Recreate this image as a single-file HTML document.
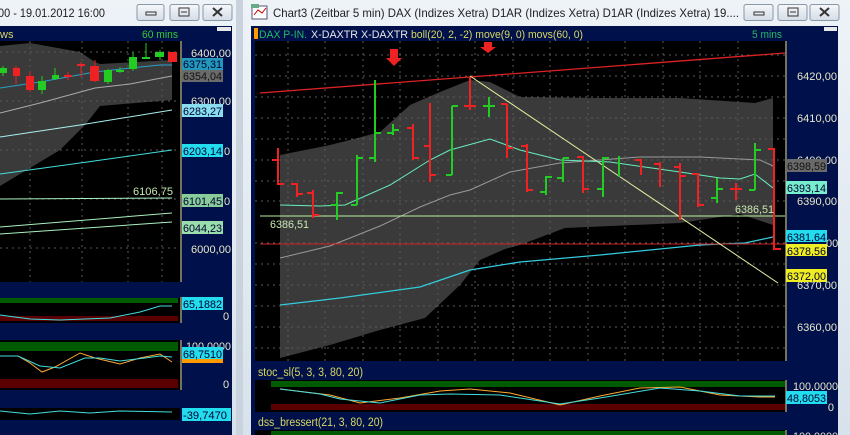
<!DOCTYPE html>
<html><head><meta charset="utf-8"><style>
html,body{margin:0;padding:0;width:850px;height:435px;overflow:hidden;background:#d9e2ec;}
svg{display:block;font-family:"Liberation Sans",sans-serif;}
</style></head><body>
<svg width="850" height="435" viewBox="0 0 850 435" xmlns="http://www.w3.org/2000/svg">
<defs>
<linearGradient id="tb" x1="0" y1="0" x2="0" y2="1"><stop offset="0" stop-color="#eef3f8"/><stop offset="1" stop-color="#d8e2ec"/></linearGradient>
<linearGradient id="btn" x1="0" y1="0" x2="0" y2="1"><stop offset="0" stop-color="#f6f8fb"/><stop offset="1" stop-color="#d3dce6"/></linearGradient>
</defs>
<rect x="0" y="0" width="850" height="435" fill="#d9e2ec"/>
<rect x="0" y="0" width="236" height="435" fill="url(#tb)"/>
<rect x="236" y="0" width="7" height="435" fill="#c9d3de"/>
<rect x="243" y="0" width="607" height="435" fill="url(#tb)"/>
<!-- left title -->
<text x="-2" y="17" font-size="12" fill="#1e1e1e" textLength="107" lengthAdjust="spacingAndGlyphs">00 - 19.01.2012 16:00</text>
<g stroke="#8a97a6" fill="url(#btn)"><rect x="137" y="4.5" width="27" height="16" rx="2"/><rect x="170" y="4.5" width="29" height="16" rx="2"/><rect x="203" y="4.5" width="29" height="16" rx="2"/></g>
<rect x="146" y="12" width="10" height="3" fill="none" stroke="#333"/>
<rect x="179" y="8" width="10" height="8" fill="none" stroke="#333"/><line x1="181" y1="12" x2="187" y2="12" stroke="#333"/>
<path d="M213 8 L222 16 M222 8 L213 16" stroke="#333" stroke-width="2"/>
<!-- right title -->
<rect x="252" y="6" width="15" height="13" fill="#fff" stroke="#557"/><path d="M254 15 L258 10 L262 13 L266 8" stroke="#c00" fill="none"/>
<rect x="251" y="4" width="8" height="4" fill="#6a8"/>
<text x="273" y="17" font-size="12" fill="#1e1e1e" textLength="466" lengthAdjust="spacingAndGlyphs">Chart3 (Zeitbar 5 min)  DAX (Indizes Xetra) D1AR (Indizes Xetra) D1AR (Indizes Xetra) 19....</text>
<g stroke="#8a97a6" fill="url(#btn)"><rect x="744" y="4.5" width="29" height="16" rx="2"/><rect x="778" y="4.5" width="29" height="16" rx="2"/><rect x="810" y="4.5" width="29" height="16" rx="2"/></g>
<rect x="754" y="12" width="10" height="3" fill="none" stroke="#333"/>
<rect x="788" y="8" width="10" height="8" fill="none" stroke="#333"/><line x1="790" y1="12" x2="796" y2="12" stroke="#333"/>
<path d="M820 8 L829 16 M829 8 L820 16" stroke="#333" stroke-width="2"/>

<!-- ===== LEFT CHART ===== -->
<rect x="0" y="26" width="232" height="409" fill="#00104a"/>
<rect x="217" y="27" width="14" height="4" fill="#e8e8e8"/>
<text x="0" y="38" font-size="11" fill="#d8d860">ws</text>
<text x="142" y="38" font-size="11" fill="#33cc33" textLength="36" lengthAdjust="spacingAndGlyphs">60 mins</text>
<rect x="0" y="41" width="180" height="241" fill="#000"/>
<path d="M0 46 L30 43 L80 52 L95 62 L100 64 L172 60 L172 100 L100 106 L85 125 L60 150 L30 168 L0 186 Z" fill="#3a3a3a"/>
<g stroke="#5a5a5a" stroke-dasharray="2,4" stroke-width="1">
<line x1="30" y1="41" x2="30" y2="282"/><line x1="82" y1="41" x2="82" y2="282"/><line x1="128" y1="41" x2="128" y2="282"/><line x1="162" y1="41" x2="162" y2="282"/>
<line x1="0" y1="52" x2="180" y2="52"/><line x1="0" y1="101" x2="180" y2="101"/><line x1="0" y1="150" x2="180" y2="150"/><line x1="0" y1="199" x2="180" y2="199"/><line x1="0" y1="248" x2="180" y2="248"/>
</g>
<polyline points="0,88 40,82 95,72 130,68 160,65 172,65" fill="none" stroke="#2aa0c8"/>
<polyline points="0,113 40,103 95,88 130,84 172,76" fill="none" stroke="#aaaaaa"/>
<polyline points="0,137 80,125 172,110" fill="none" stroke="#aaf0f0"/>
<polyline points="0,174 80,163 172,150" fill="none" stroke="#44dddd"/>
<polyline points="0,199 172,198" fill="none" stroke="#aaf0c0"/>
<polyline points="0,227 172,213" fill="none" stroke="#aaf0c0"/>
<polyline points="0,234 172,222" fill="none" stroke="#aaf0c0"/>
<g stroke-width="1">
<line x1="3" y1="66" x2="3" y2="76" stroke="#22cc22"/><rect x="0" y="68" width="7" height="5" fill="#22cc22"/>
<line x1="16" y1="66" x2="16" y2="84" stroke="#ee2222"/><rect x="13" y="68" width="7" height="8" fill="#ee2222"/>
<line x1="30" y1="72" x2="30" y2="92" stroke="#ee2222"/><rect x="26" y="76" width="8" height="14" fill="#ee2222"/>
<line x1="42" y1="76" x2="42" y2="94" stroke="#22cc22"/><rect x="38" y="81" width="8" height="9" fill="#22cc22"/>
<line x1="55" y1="68" x2="55" y2="80" stroke="#22cc22"/><rect x="52" y="75" width="7" height="4" fill="#22cc22"/>
<rect x="64" y="75" width="8" height="2" fill="#ee2222"/><line x1="68" y1="72" x2="68" y2="80" stroke="#ee2222"/>
<line x1="81" y1="62" x2="81" y2="77" stroke="#ee2222"/><rect x="77" y="64" width="8" height="2" fill="#ee2222"/>
<line x1="95" y1="60" x2="95" y2="82" stroke="#ee2222"/><rect x="90" y="66" width="9" height="15" fill="#ee2222"/>
<line x1="108" y1="69" x2="108" y2="84" stroke="#22cc22"/><rect x="104" y="70" width="8" height="12" fill="#22cc22"/>
<line x1="120" y1="67" x2="120" y2="73" stroke="#22cc22"/><rect x="116" y="70" width="8" height="2" fill="#22cc22"/>
<line x1="133" y1="52" x2="133" y2="71" stroke="#22cc22"/><rect x="129" y="57" width="8" height="12" fill="#22cc22"/>
<line x1="146" y1="43" x2="146" y2="59" stroke="#22cc22"/><rect x="142" y="57" width="8" height="2" fill="#22cc22"/>
<line x1="160" y1="50" x2="160" y2="60" stroke="#22cc22"/><rect x="155" y="52" width="9" height="5" fill="#22cc22"/>
<rect x="168" y="52" width="9" height="10" fill="#ee2222"/>
</g>
<text x="133" y="195" font-size="11" fill="#c8e8b0" textLength="40" lengthAdjust="spacingAndGlyphs">6106,75</text>
<line x1="181" y1="41" x2="181" y2="282" stroke="#e8d870"/>
<g font-size="11" lengthAdjust="spacingAndGlyphs">
<text x="191" y="57" fill="#e8e8c8" textLength="40" lengthAdjust="spacingAndGlyphs">6400,00</text>
<rect x="182" y="58" width="41" height="12" fill="#2299bb"/><text x="183" y="68" fill="#003" textLength="39" lengthAdjust="spacingAndGlyphs">6375,31</text>
<rect x="182" y="70" width="41" height="12" fill="#6a6a6a"/><text x="183" y="80" fill="#111" textLength="39" lengthAdjust="spacingAndGlyphs">6354,04</text>
<text x="191" y="105" fill="#e8e8c8" textLength="40" lengthAdjust="spacingAndGlyphs">6300,00</text>
<rect x="182" y="104" width="41" height="13" fill="#88ddee"/><text x="183" y="115" fill="#003" textLength="39" lengthAdjust="spacingAndGlyphs">6283,27</text>
<rect x="182" y="144" width="41" height="13" fill="#22ddee"/><text x="183" y="155" fill="#003" textLength="39" lengthAdjust="spacingAndGlyphs">6203,14</text><text x="224" y="155" fill="#e8e8c8">0</text>
<rect x="182" y="194" width="41" height="13" fill="#88cc99"/><text x="183" y="205" fill="#003" textLength="39" lengthAdjust="spacingAndGlyphs">6101,45</text><text x="224" y="205" fill="#e8e8c8">0</text>
<rect x="182" y="221" width="41" height="13" fill="#99ddaa"/><text x="183" y="232" fill="#003" textLength="39" lengthAdjust="spacingAndGlyphs">6044,23</text>
<text x="191" y="253" fill="#e8e8c8" textLength="40" lengthAdjust="spacingAndGlyphs">6000,00</text>
</g>
<!-- left subpanels -->
<rect x="0" y="298" width="180" height="25" fill="#000"/>
<rect x="0" y="298" width="178" height="5" fill="#005a00"/><rect x="0" y="316" width="178" height="5" fill="#5a0000"/>
<polyline points="0,315 30,319 60,320 110,318 140,312 160,306 172,306" fill="none" stroke="#44dddd"/>
<line x1="181" y1="297" x2="181" y2="323" stroke="#e8d870"/>
<rect x="182" y="297" width="41" height="13" fill="#22ddee"/><text x="183" y="308" font-size="11" fill="#003" textLength="39" lengthAdjust="spacingAndGlyphs">65,1882</text><text x="223" y="320" font-size="11" fill="#e8e8c8">0</text>
<rect x="0" y="340" width="180" height="50" fill="#000"/>
<rect x="0" y="342" width="178" height="9" fill="#005a00"/><rect x="0" y="379" width="178" height="9" fill="#5a0000"/>
<polyline points="0,356 18,356 30,363 42,372 55,367 80,353 95,358 120,364 140,358 160,354 172,362" fill="none" stroke="#ffaa33"/>
<polyline points="0,356 18,356 40,366 60,368 85,358 100,358 120,361 145,358 160,356 172,357" fill="none" stroke="#44dddd"/>
<line x1="181" y1="340" x2="181" y2="390" stroke="#e8d870"/>
<text x="186" y="350" font-size="11" fill="#e8e8c8" textLength="45" lengthAdjust="spacingAndGlyphs">100,0000</text>
<rect x="182" y="355" width="41" height="8" fill="#ff9900"/>
<rect x="182" y="347" width="41" height="12" fill="#22ddee"/><text x="183" y="358" font-size="11" fill="#003" textLength="39" lengthAdjust="spacingAndGlyphs">68,7510</text>
<text x="223" y="388" font-size="11" fill="#e8e8c8">0</text>
<rect x="0" y="408" width="180" height="12" fill="#000"/>
<polyline points="0,411 30,414 60,411 90,413 120,411 172,412" fill="none" stroke="#44dddd"/>
<rect x="182" y="408" width="49" height="13" fill="#22ddee"/><text x="183" y="419" font-size="11" fill="#003" textLength="44" lengthAdjust="spacingAndGlyphs">-39,7470</text>

<!-- ===== RIGHT CHART ===== -->
<rect x="251" y="26" width="587" height="409" fill="#00104a"/>
<rect x="824" y="27" width="13" height="4" fill="#e8e8e8"/>
<rect x="254" y="28" width="4" height="11" fill="#ff9900"/>
<text x="259" y="38" font-size="11" fill="#22bb66" textLength="48" lengthAdjust="spacingAndGlyphs">DAX P-IN.</text>
<text x="311" y="38" font-size="11" fill="#e8e8e8" textLength="97" lengthAdjust="spacingAndGlyphs">X-DAXTR X-DAXTR</text>
<text x="411" y="38" font-size="11" fill="#d8d860" textLength="172" lengthAdjust="spacingAndGlyphs">boll(20, 2, -2) move(9, 0) movs(60, 0)</text>
<text x="752" y="38" font-size="11" fill="#22bb66" textLength="30" lengthAdjust="spacingAndGlyphs">5 mins</text>
<rect x="255" y="41" width="530" height="320" fill="#000"/>
<path d="M280 155 L330 145 L350 140 L380 132 L410 105 L440 92 L470 80 L490 82 L510 92 L520 97 L600 98 L680 98 L755 103 L773 98 L773 225 L740 214 L680 223 L565 228 L520 245 L505 249 L480 260 L460 285 L425 318 L380 330 L330 345 L280 358 Z" fill="#3a3a3a"/>
<g stroke="#5a5a5a" stroke-dasharray="2,4">
<line x1="288" y1="41" x2="288" y2="361"/><line x1="325" y1="41" x2="325" y2="361"/><line x1="363" y1="41" x2="363" y2="361"/><line x1="400" y1="41" x2="400" y2="361"/><line x1="438" y1="41" x2="438" y2="361"/><line x1="475" y1="41" x2="475" y2="361"/><line x1="513" y1="41" x2="513" y2="361"/><line x1="550" y1="41" x2="550" y2="361"/><line x1="588" y1="41" x2="588" y2="361"/><line x1="625" y1="41" x2="625" y2="361"/><line x1="663" y1="41" x2="663" y2="361"/><line x1="700" y1="41" x2="700" y2="361"/><line x1="738" y1="41" x2="738" y2="361"/>
<line x1="255" y1="55" x2="785" y2="55"/><line x1="255" y1="76" x2="785" y2="76"/><line x1="255" y1="97" x2="785" y2="97"/><line x1="255" y1="118" x2="785" y2="118"/><line x1="255" y1="139" x2="785" y2="139"/><line x1="255" y1="160" x2="785" y2="160"/><line x1="255" y1="181" x2="785" y2="181"/><line x1="255" y1="201" x2="785" y2="201"/><line x1="255" y1="243" x2="785" y2="243"/><line x1="255" y1="264" x2="785" y2="264"/><line x1="255" y1="285" x2="785" y2="285"/><line x1="255" y1="306" x2="785" y2="306"/><line x1="255" y1="327" x2="785" y2="327"/><line x1="255" y1="348" x2="785" y2="348"/>
</g>
<polyline points="280,258 330,246 380,226 420,207 450,195 470,190 510,172 560,163 640,157 700,157 760,160 773,166" fill="none" stroke="#999"/>
<polyline points="280,305 340,298 420,287 470,270 520,262 600,255 700,245 745,243 773,237" fill="none" stroke="#33ccdd" stroke-width="1.3"/>
<line x1="260" y1="93" x2="785" y2="53" stroke="#dd2222" stroke-width="1.3"/>
<line x1="260" y1="216" x2="785" y2="216" stroke="#b8f0a0"/>
<line x1="260" y1="244" x2="785" y2="244" stroke="#cc2222"/>
<line x1="470" y1="76" x2="778" y2="283" stroke="#e8f0a0"/>
<polyline points="280,205 320,206 345,205 390,185 430,160 450,150 490,139 520,150 560,160 610,162 680,172 720,178 740,179 755,174 773,188" fill="none" stroke="#66eebb"/>
<g stroke-width="2" fill="none">
<g stroke="#ee2222">
<path d="M278 148V185M272 160H278M278 184H284"/>
<path d="M297 183V197M291 184H297M297 194H303"/>
<path d="M313 190V218M307 193H313M313 215H319"/>
<path d="M413 124V160M407 128H413M413 158H419"/>
<path d="M430 103V182M424 146H430M430 175H436"/>
<path d="M470 77V110M464 106H476"/>
<path d="M507 104V158M501 104H507M507 148H513"/>
<path d="M527 144V192M521 146H527M527 190H533"/>
<path d="M583 156V193M577 157H583M583 189H589"/>
<path d="M641 159V175M635 160H641"/>
<path d="M660 162V187M654 164H660"/>
<path d="M680 163V220M674 167H680M680 176H686"/>
<path d="M698 173V207M692 174H698M698 205H704"/>
<path d="M736 183V200M730 189H742"/>
<path d="M774 148V250M768 149H774M774 249H781"/>
</g>
<g stroke="#22cc22">
<path d="M337 192V220M331 205H337M337 193H343"/>
<path d="M357 155V205M351 205H357M357 158H363"/>
<path d="M375 80V162M369 158H375M375 133H381"/>
<path d="M393 124V135M387 133H393M393 130H399"/>
<path d="M452 106V175M446 175H452M452 106H458"/>
<path d="M489 97V117M483 106H495"/>
<path d="M546 176V195M540 192H546M546 177H552"/>
<path d="M563 158V182M557 178H563M563 158H569"/>
<path d="M603 157V197M597 189H603M603 158H609"/>
<path d="M619 156V177"/>
<path d="M717 178V203M711 198H717M717 189H723"/>
<path d="M755 143V190M749 190H755M755 150H761"/>
</g>
</g>
<path d="M390 49H398V58H402L394 66L386 58H390Z" fill="#ee2222"/>
<path d="M484 42H492V47H496L488 53L480 47H484Z" fill="#ee2222"/>
<text x="270" y="228" font-size="11" fill="#c8e8b0" textLength="39" lengthAdjust="spacingAndGlyphs">6386,51</text>
<text x="735" y="213" font-size="11" fill="#c8e8b0" textLength="39" lengthAdjust="spacingAndGlyphs">6386,51</text>
<line x1="786" y1="41" x2="786" y2="361" stroke="#e8d870"/>
<g font-size="11">
<text x="797" y="80" fill="#e8e8c8" textLength="40" lengthAdjust="spacingAndGlyphs">6420,00</text>
<text x="797" y="122" fill="#e8e8c8" textLength="40" lengthAdjust="spacingAndGlyphs">6410,00</text>
<text x="797" y="164" fill="#e8e8c8" textLength="40" lengthAdjust="spacingAndGlyphs">6400,00</text>
<rect x="786" y="159" width="41" height="13" fill="#6a6a6a"/><text x="787" y="170" fill="#111" textLength="39" lengthAdjust="spacingAndGlyphs">6398,59</text>
<rect x="786" y="181" width="41" height="13" fill="#77eecc"/><text x="787" y="192" fill="#003" textLength="39" lengthAdjust="spacingAndGlyphs">6393,14</text>
<text x="797" y="205" fill="#e8e8c8" textLength="40" lengthAdjust="spacingAndGlyphs">6390,00</text>
<text x="826" y="247" fill="#e8e8c8">00</text>
<rect x="786" y="230" width="41" height="12" fill="#22ddee"/><text x="787" y="241" fill="#003" textLength="39" lengthAdjust="spacingAndGlyphs">6381,64</text>
<rect x="786" y="244" width="41" height="12" fill="#eeee22"/><text x="787" y="255" fill="#003" textLength="39" lengthAdjust="spacingAndGlyphs">6378,56</text>
<text x="797" y="289" fill="#e8e8c8" textLength="40" lengthAdjust="spacingAndGlyphs">6370,00</text>
<rect x="786" y="269" width="41" height="13" fill="#eeee22"/><text x="787" y="280" fill="#003" textLength="39" lengthAdjust="spacingAndGlyphs">6372,00</text>
<text x="797" y="331" fill="#e8e8c8" textLength="40" lengthAdjust="spacingAndGlyphs">6360,00</text>
</g>
<text x="258" y="376" font-size="11.5" fill="#d8d860" textLength="105" lengthAdjust="spacingAndGlyphs">stoc_sl(5, 3, 3, 80, 20)</text>
<rect x="255" y="380" width="530" height="32" fill="#000"/>
<rect x="271" y="381" width="514" height="6" fill="#005a00"/><rect x="271" y="404" width="514" height="6" fill="#5a0000"/>
<polyline points="280,389 330,395 360,403 400,398 440,391 470,389 510,393 560,405 600,396 640,388 680,387 720,395 760,397 775,397" fill="none" stroke="#ffaa33"/>
<polyline points="280,389 320,394 340,399 380,403 420,395 450,394 500,395 560,404 600,398 660,388 700,391 740,396 775,396" fill="none" stroke="#44dddd"/>
<line x1="786" y1="380" x2="786" y2="412" stroke="#e8d870"/>
<text x="793" y="390" font-size="11" fill="#e8e8c8" textLength="45" lengthAdjust="spacingAndGlyphs">100,0000</text>
<rect x="786" y="391" width="41" height="13" fill="#22ddee"/><text x="787" y="402" font-size="11" fill="#003" textLength="39" lengthAdjust="spacingAndGlyphs">48,8053</text>
<text x="834" y="411" font-size="11" fill="#e8e8c8" text-anchor="end">0</text>
<text x="258" y="426" font-size="11.5" fill="#d8d860" textLength="125" lengthAdjust="spacingAndGlyphs">dss_bressert(21, 3, 80, 20)</text>
<rect x="255" y="430" width="530" height="5" fill="#000"/><rect x="271" y="431" width="514" height="4" fill="#005a00"/>
<line x1="786" y1="430" x2="786" y2="435" stroke="#e8d870"/>
<text x="793" y="440" font-size="11" fill="#e8e8c8" textLength="45" lengthAdjust="spacingAndGlyphs">100,0000</text>
</svg>
</body></html>
